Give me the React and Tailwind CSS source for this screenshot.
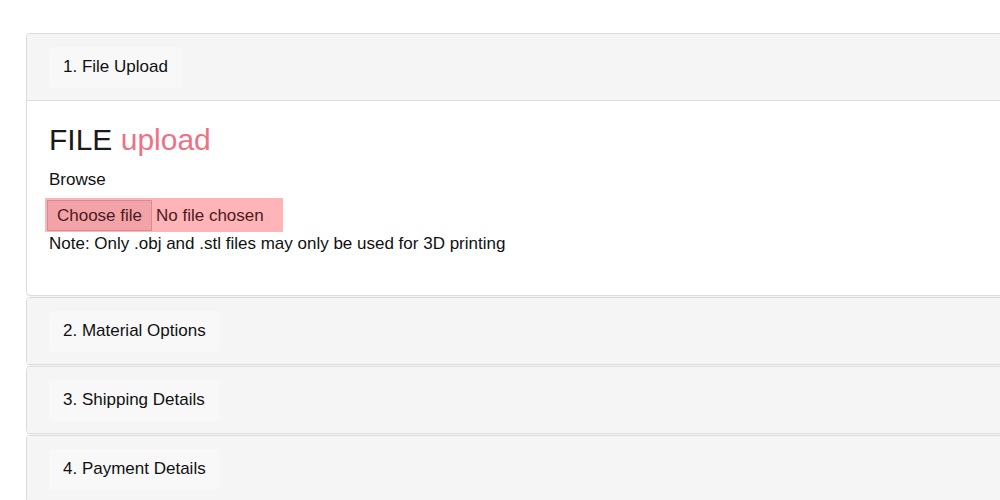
const sections = ['2. Material Options', '3. Shipping Details', '4. Payment Details'];

const PanelHeader = ({ title }) => (
  <div className="h-[66px] bg-[#f5f5f5] flex items-center pl-[22px]">
    <div className="h-[41px] px-[14px] flex items-center bg-[#f8f8f9] rounded-[3px] text-[17px] text-[#111]">
      {title}
    </div>
  </div>
);

export default function App() {
  return (
    <div className="w-[1000px] h-[500px] overflow-hidden bg-white font-['Liberation_Sans',Arial,sans-serif]">
      <div className="pt-[33px] pl-[26px] w-[1100px] flex flex-col gap-px">
        {/* File upload panel, open */}
        <div className="border border-[#dcdcdc] rounded-[4px] bg-white shadow-[0_1px_1px_rgba(0,0,0,0.05)]">
          <div className="border-b border-[#dcdcdc] rounded-t-[4px] overflow-hidden">
            <PanelHeader title="1. File Upload" />
          </div>
          <div className="h-[194px] px-[22px] pt-[22px]">
            <h1 className="text-[30px] leading-[33px] text-[#1a1a1a]">
              FILE <span className="text-[#ee7185]">upload</span>
            </h1>
            <p className="mt-[14px] text-[17px] leading-[20px] text-[#111]">Browse</p>
            <div className="mt-[8px] -ml-[4px] w-[238px] h-[34px] bg-[#ffb4b7] flex items-center pl-[2px]">
              <div className="h-[31px] w-[105px] border border-[#d08f93] bg-[#f2a3a7] flex items-center justify-center pt-[2px] text-[17px] text-[#4b1a1e]">
                Choose file
              </div>
              <span className="ml-[4px] pt-[2px] text-[17px] text-[#4b1a1e]">No file chosen</span>
            </div>
            <p className="text-[17px] leading-[20px] mt-[2px] text-[#111]">
              Note: Only .obj and .stl files may only be used for 3D printing
            </p>
          </div>
        </div>

        {sections.map((s) => (
          <div
            key={s}
            className="border border-[#dcdcdc] rounded-[4px] overflow-hidden shadow-[0_1px_1px_rgba(0,0,0,0.05)]"
          >
            <PanelHeader title={s} />
          </div>
        ))}
      </div>
    </div>
  );
}
